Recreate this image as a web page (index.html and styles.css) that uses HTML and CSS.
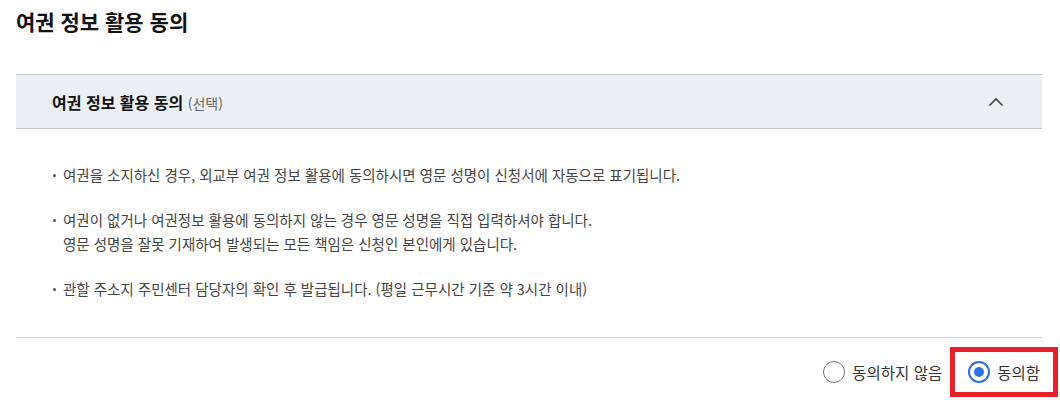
FILE: index.html
```html
<!DOCTYPE html>
<html lang="ko">
<head>
  <meta charset="UTF-8">
  <meta name="viewport" content="width=device-width, initial-scale=1.0">
  <title>여권 정보 활용 동의</title>
  <link rel="stylesheet" href="styles.css">
</head>
<body>
  <div class="page">
    <h2 class="page-title">여권 정보 활용 동의</h2>

    <div class="accordion">
      <div class="accordion-head">
        <span class="accordion-title">여권 정보 활용 동의 <em>(선택)</em></span>
        <svg class="chevron" width="16" height="10" viewBox="0 0 16 10">
          <path d="M1.5 8.5 L8 2 L14.5 8.5" fill="none" stroke="#444" stroke-width="1.6"/>
        </svg>
      </div>
      <ul class="notes">
        <li>여권을 소지하신 경우, 외교부 여권 정보 활용에 동의하시면 영문 성명이 신청서에 자동으로 표기됩니다.</li>
        <li>여권이 없거나 여권정보 활용에 동의하지 않는 경우 영문 성명을 직접 입력하셔야 합니다.<br>영문 성명을 잘못 기재하여 발생되는 모든 책임은 신청인 본인에게 있습니다.</li>
        <li>관할 주소지 주민센터 담당자의 확인 후 발급됩니다. (평일 근무시간 기준 약 3시간 이내)</li>
      </ul>
    </div>

    <div class="choices">
      <label class="choice">
        <input type="radio" name="agree" value="n">
        <span class="dot"></span>
        <span>동의하지 않음</span>
      </label>
      <label class="choice marked">
        <input type="radio" name="agree" value="y" checked>
        <span class="dot"></span>
        <span>동의함</span>
      </label>
    </div>
  </div>
</body>
</html>
```

FILE: styles.css
```css
body {
  margin: 0;
  font-family: "Noto Sans CJK KR", "Noto Sans", sans-serif;
  color: #222;
  background: #fff;
}
.page {
  width: 1026px;
  padding: 0 16px 40px;
}
.page-title {
  margin: 0;
  padding-top: 7px;
  font-size: 21px;
  font-weight: 700;
  line-height: 28px;
  color: #111;
}
.accordion {
  margin-top: 39px;
  border-bottom: 1px solid #cfcfcf;
}
.accordion-head {
  display: flex;
  align-items: center;
  justify-content: space-between;
  height: 53px;
  padding: 0 38px 0 36px;
  background: #eceff4;
  border-top: 1px solid #c8c8c8;
  border-bottom: 1px solid #c8c8c8;
}
.accordion-title {
  font-size: 16px;
  font-weight: 700;
  color: #111;
}
.accordion-title em {
  font-style: normal;
  font-weight: 400;
  font-size: 14px;
  color: #666;
}
.notes {
  list-style: none;
  margin: 0;
  padding: 34px 0 36px 37px;
}
.notes li {
  position: relative;
  padding-left: 10px;
  font-size: 14.5px;
  line-height: 24px;
  color: #444;
}
.notes li + li {
  margin-top: 21px;
}
.notes li::before {
  content: "";
  position: absolute;
  left: 0;
  top: 11px;
  width: 3px;
  height: 3px;
  border-radius: 50%;
  background: #555;
}
.choices {
  display: flex;
  justify-content: flex-end;
  gap: 26px;
  padding: 23px 2px 0 0;
}
.choice {
  position: relative;
  display: flex;
  align-items: center;
  gap: 7px;
  font-size: 15.5px;
  color: #333;
  cursor: pointer;
}
.choice input {
  display: none;
}
.dot {
  width: 20px;
  height: 20px;
  border: 1px solid #777;
  border-radius: 50%;
  display: flex;
  align-items: center;
  justify-content: center;
}
.choice input:checked + .dot {
  border: 2px solid #2f6fe4;
  width: 18px;
  height: 18px;
}
.choice input:checked + .dot::after {
  content: "";
  width: 10px;
  height: 10px;
  border-radius: 50%;
  background: #2f6fe4;
}
.marked::after {
  content: "";
  position: absolute;
  left: -18px;
  right: -18px;
  top: -14px;
  bottom: -14px;
  border: 5px solid #e8202a;
}
```
